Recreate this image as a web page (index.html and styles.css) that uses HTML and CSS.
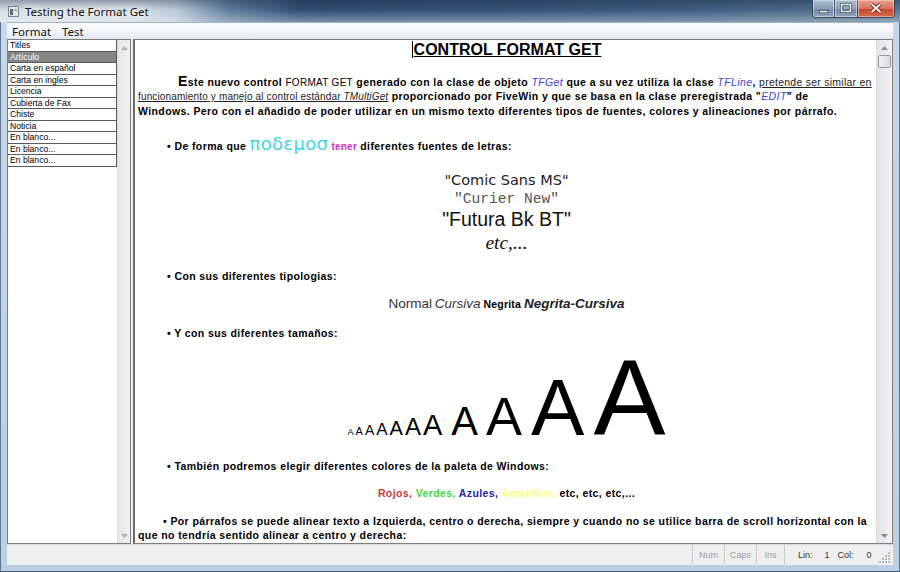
FILE: index.html
```html
<!DOCTYPE html>
<html lang="es">
<head>
<meta charset="utf-8">
<title>Testing the Format Get</title>
<link rel="stylesheet" href="styles.css">
</head>
<body>
<div class="window">
  <div class="titlebar">
    <svg class="appicon" width="11" height="11" viewBox="0 0 11 11"><rect x="0.5" y="0.5" width="10" height="10" fill="#e4e6e8" stroke="#7d8690"/><rect x="2" y="3" width="3" height="6" fill="#5f6670"/><rect x="6" y="3" width="3" height="2" fill="#a9b0b8"/></svg>
    <span class="title">Testing the Format Get</span>
    <div class="caption">
      <div class="cbtn cmin"><svg width="22" height="17" viewBox="0 0 22 17"><rect x="6.5" y="10.5" width="9" height="2.5" fill="#fff" stroke="#33475c" stroke-width="0.8"/></svg></div>
      <div class="cbtn cmax"><svg width="22" height="17" viewBox="0 0 22 17"><rect x="6.5" y="4.5" width="9" height="7" fill="none" stroke="#33475c" stroke-width="2.6"/><rect x="6.5" y="4.5" width="9" height="7" fill="none" stroke="#fff" stroke-width="1.3"/></svg></div>
      <div class="cbtn cclose"><svg width="37" height="17" viewBox="0 0 37 17"><path d="M14 4 L23 12 M23 4 L14 12" stroke="#6b1d12" stroke-width="3.6"/><path d="M14 4 L23 12 M23 4 L14 12" stroke="#fff" stroke-width="2"/></svg></div>
    </div>
  </div>
  <div class="menubar"><span class="mi">Format</span><span class="mi">Test</span></div>
  <div class="client">
    <div class="listbox">
      <div class="items">
        <div class="item">Titles</div>
        <div class="item sel">Artículo</div>
        <div class="item">Carta en español</div>
        <div class="item">Carta en ingles</div>
        <div class="item">Licencia</div>
        <div class="item">Cubierta de Fax</div>
        <div class="item">Chiste</div>
        <div class="item">Noticia</div>
        <div class="item">En blanco...</div>
        <div class="item">En blanco...</div>
        <div class="item">En blanco...</div>
      </div>
      <div class="vscroll lscroll">
        <div class="arr"><svg width="7" height="4" viewBox="0 0 7 4"><path d="M0 4 L3.5 0 L7 4 Z" fill="#b0b0b0"/></svg></div>
        <div class="arr"><svg width="7" height="4" viewBox="0 0 7 4"><path d="M0 0 L3.5 4 L7 0 Z" fill="#b0b0b0"/></svg></div>
      </div>
    </div>
    <div class="editor">
      <div class="doc">
        <div class="h"><span class="caret"></span>CONTROL FORMAT GET</div>
        <div class="p1"><span class="big">E</span>ste nuevo control <span class="n">FORMAT GET</span> generado con la clase de objeto <i class="cls">TFGet</i> que a su vez utiliza la clase <i class="cls">TFLine</i>, <span class="u">pretende ser similar en </span><br><span class="u2">funcionamiento y manejo al control estándar <i>TMultiGet</i></span> proporcionado por FiveWin y que se basa en la clase preregistrada "<i class="cls">EDIT</i>" de<br>Windows. Pero con el añadido de poder utilizar en un mismo texto diferentes tipos de fuentes, colores y alineaciones por párrafo.</div>
        <div class="bl b1">• De forma que <span class="greek">ποδεμοσ</span> <span class="tener">tener</span> diferentes fuentes de letras:</div>
        <div class="fonts">
          <div class="f-comic">"Comic Sans MS"</div>
          <div class="f-cour">"Curier New"</div>
          <div class="f-fut">"Futura Bk BT"</div>
          <div class="f-etc">etc,...</div>
        </div>
        <div class="bl b2">• Con sus diferentes tipologias:</div>
        <div class="types"><span class="t-n">Normal</span> <span class="t-i">Cursiva</span> <span class="t-b">Negrita</span> <span class="t-bi">Negrita-Cursiva</span></div>
        <div class="bl b3">• Y con sus diferentes tamaños:</div>
        <div class="sizes"><span class="a s1">A</span><span class="a s2">A</span><span class="a s3">A</span><span class="a s4">A</span><span class="a s5">A</span><span class="a s6">A</span><span class="a s7">A</span><span class="a s8">A</span><span class="a s9">A</span><span class="a s10">A</span><span class="a s11">A</span></div>
        <div class="bl b4">• También podremos elegir diferentes colores de la paleta de Windows:</div>
        <div class="colors"><span class="c-red">Rojos,</span> <span class="c-green">Verdes,</span> <span class="c-blue">Azules,</span> <span class="c-yel">Amarillos,</span> etc, etc, etc,...</div>
        <div class="last">• Por párrafos se puede alinear texto a Izquierda, centro o derecha, siempre y cuando no se utilice barra de scroll horizontal con la<br>que no tendría sentido alinear a centro y derecha:</div>
      </div>
      <div class="vscroll escroll">
        <div class="arr"><svg width="7" height="4" viewBox="0 0 7 4"><path d="M0 4 L3.5 0 L7 4 Z" fill="#8a8a8a"/></svg></div>
        <div class="thumb"></div>
        <div class="track"></div>
        <div class="arr"><svg width="7" height="4" viewBox="0 0 7 4"><path d="M0 0 L3.5 4 L7 0 Z" fill="#8a8a8a"/></svg></div>
      </div>
    </div>
  </div>
  <div class="statusbar">
    <div class="sb-fill"></div>
    <div class="pn pn-num">Num</div>
    <div class="pn pn-caps">Caps</div>
    <div class="pn pn-ins">Ins</div>
    <div class="pn pn-pos"><span>Lin:</span><span class="v1">1</span><span class="lc">Col:</span><span class="v2">0</span></div>
    <div class="grip"><svg width="12" height="12" viewBox="0 0 12 12"><g fill="#b9b9b9"><rect x="9" y="1" width="2" height="2"/><rect x="6" y="4" width="2" height="2"/><rect x="9" y="4" width="2" height="2"/><rect x="3" y="7" width="2" height="2"/><rect x="6" y="7" width="2" height="2"/><rect x="9" y="7" width="2" height="2"/><rect x="0" y="10" width="2" height="2"/><rect x="3" y="10" width="2" height="2"/><rect x="6" y="10" width="2" height="2"/><rect x="9" y="10" width="2" height="2"/></g></svg></div>
  </div>
</div>
</body>
</html>
```
FILE: styles.css
```css
* { box-sizing: border-box; }
html, body { margin: 0; padding: 0; }
body {
  width: 900px;
  height: 572px;
  overflow: hidden;
  background: #c3d4e6;
  font-family: "Liberation Sans", Arial, sans-serif;
}
.window {
  width: 900px;
  height: 572px;
  display: flex;
  flex-direction: column;
  padding: 0 6px 6px;
  border-left: 1px solid #5b7490;
  border-right: 1px solid #5b7490;
  border-bottom: 1px solid #3f5671;
  background: linear-gradient(180deg, #c8d8e9 0%, #bccfe3 100%);
}

/* title bar */
.titlebar {
  height: 22px;
  margin: 0 -7px;
  padding-left: 8px;
  display: flex;
  align-items: center;
  background:
    linear-gradient(180deg, rgba(20,35,55,0.35) 0%, rgba(255,255,255,0) 45%, rgba(255,255,255,0.35) 100%),
    linear-gradient(90deg, #d5dee7 0px, #cfd9e3 130px, #b9c9d9 175px, #5d7c9c 230px, #2f4e72 300px, #34547a 520px, #3e5e80 700px, #587590 900px);
}
.appicon { flex: none; }
.title {
  margin-left: 6px;
  font-family: "Noto Sans", "Open Sans", sans-serif;
  font-size: 11.5px;
  color: #111;
  text-shadow: 0 0 6px #fff, 0 0 10px #fff, 0 0 14px rgba(255,255,255,0.9);
}
.caption {
  margin-left: auto;
  margin-right: 5px;
  align-self: flex-start;
  display: flex;
  height: 18px;
  border: 1px solid rgba(40,55,75,0.8);
  border-top: none;
  border-radius: 0 0 4px 4px;
  overflow: hidden;
}
.cbtn { height: 17px; display: flex; }
.cmin, .cmax {
  width: 22px;
  background: linear-gradient(180deg, #a9bacb 0%, #8aa0b6 50%, #6f869e 51%, #8ea5bb 100%);
  box-shadow: inset 0 0 0 1px rgba(255,255,255,0.45);
}
.cmin { border-right: 1px solid rgba(40,55,75,0.7); }
.cclose {
  width: 37px;
  border-left: 1px solid rgba(40,55,75,0.7);
  background: linear-gradient(180deg, #e8a395 0%, #d7715d 50%, #c2462d 51%, #d56b4f 100%);
  box-shadow: inset 0 0 0 1px rgba(255,220,210,0.5);
}

/* menu */
.menubar {
  height: 17px;
  display: flex;
  align-items: center;
  gap: 11px;
  padding-left: 5px;
  background: linear-gradient(180deg, #fbfcfe 0%, #f1f4f9 60%, #e4eaf2 100%);
  border-top: 1px solid #9fb1c4;
}
.mi {
  font-family: "Noto Sans", "Open Sans", sans-serif;
  font-size: 11.5px;
  color: #111;
}

/* client */
.client {
  flex: 1;
  display: flex;
  background: #f0f0f0;
  min-height: 0;
}
.listbox {
  width: 124px;
  display: flex;
  border: 1px solid #7e7e7e;
  background: #fff;
}
.items { width: 109px; }
.item {
  height: 11.55px;
  padding-left: 2px;
  border-bottom: 1px solid #5a5a5a;
  border-right: 1px solid #5a5a5a;
  font-size: 8.6px;
  line-height: 10.5px;
  color: #000;
  white-space: nowrap;
}
.item.sel { background: #858585; color: #fff; }
.vscroll {
  display: flex;
  flex-direction: column;
  justify-content: space-between;
}
.lscroll {
  width: 13px;
  background: linear-gradient(90deg, #e6e6e6, #f2f2f2);
  border-left: 1px solid #dcdcdc;
}
.arr {
  height: 15px;
  display: flex;
  align-items: center;
  justify-content: center;
}

.editor {
  flex: 1;
  margin-left: 2px;
  display: flex;
  border: 1px solid #7e7e7e;
  border-left: 2px solid #6a6a6a;
  background: #fff;
}
.escroll {
  width: 16px;
  background: linear-gradient(90deg, #e4e4e4, #f3f3f3);
  border-left: 1px solid #e0e0e0;
  justify-content: flex-start;
}
.escroll .thumb {
  height: 13px;
  margin: 0 1px;
  border: 1px solid #989898;
  border-radius: 2px;
  background: linear-gradient(90deg, #f4f4f4, #dadada);
}
.escroll .track { flex: 1; }

/* document */
.doc {
  flex: 1;
  padding: 0 1px 0 3px;
  overflow: hidden;
  color: #000;
  font-size: 10.5px;
  font-weight: bold;
  letter-spacing: 0.4px;
  white-space: nowrap;
}
.h {
  text-align: center;
  font-size: 16px;
  line-height: 20px;
  letter-spacing: 0;
  text-decoration: underline;
}
.caret {
  display: inline-block;
  width: 1px;
  height: 17px;
  background: #000;
  vertical-align: -3px;
  margin-right: 1px;
}
.p1 {
  margin-top: 14.75px;
  line-height: 14.5px;
  text-indent: 40px;
}
.big { font-size: 14px; line-height: 0; }
.n { font-weight: normal; font-size: 10px; letter-spacing: 0.3px; line-height: 0; }
.cls { font-weight: normal; color: #4242c6; }
.u { font-weight: normal; text-decoration: underline; color: #222; letter-spacing: 0.25px; }
.u2 { font-weight: normal; text-decoration: underline; color: #222; font-size: 10px; letter-spacing: 0.15px; line-height: 0; }
.u2 i { font-weight: normal; }

.bl { padding-left: 29px; line-height: 16px; }
.b1 { margin-top: 17.75px; line-height: 20px; }
.greek {
  font-family: "DejaVu Sans", sans-serif;
  font-weight: normal;
  font-size: 18px;
  letter-spacing: 0.3px;
  color: #3fd6e2;
  line-height: 0;
}
.tener { color: #d532c2; font-size: 10px; letter-spacing: 0.2px; line-height: 0; }

.fonts { margin-top: 14px; text-align: center; font-weight: normal; letter-spacing: 0; }
.f-comic { font-family: "DejaVu Sans", sans-serif; font-size: 14.5px; line-height: 20px; color: #1d1d1d; }
.f-cour { font-family: "Liberation Mono", monospace; font-size: 14.6px; line-height: 18px; color: #555; }
.f-fut { font-family: "Liberation Sans", sans-serif; font-size: 19.5px; line-height: 22px; color: #111; }
.f-etc { font-family: "Liberation Serif", serif; font-style: italic; font-size: 19.5px; line-height: 26px; color: #111; }

.b2 { margin-top: 12px; }
.types { margin-top: 11px; line-height: 18px; text-align: center; letter-spacing: 0; }
.t-n, .t-i { font-weight: normal; font-size: 13.5px; color: #333; }
.t-i { font-style: italic; }
.t-b { font-size: 10.5px; letter-spacing: 0.2px; }
.t-bi { font-style: italic; font-size: 13.5px; color: #222; }

.b3 { margin-top: 12px; }
.sizes {
  margin-top: 2.8px;
  display: flex;
  justify-content: center;
  align-items: baseline;
  font-weight: normal;
  letter-spacing: 0;
}
.a { line-height: 1; color: #000; margin-right: 2px; }
.s1 { font-size: 9px; }
.s2 { font-size: 11px; }
.s3 { font-size: 14px; }
.s4 { font-size: 17px; }
.s5 { font-size: 20px; }
.s6 { font-size: 24px; }
.s7 { font-size: 29px; margin-right: 9px; }
.s8 { font-size: 40px; margin-right: 8px; }
.s9 { font-size: 54px; margin-right: 9px; }
.s10 { font-size: 80px; margin-right: 9px; }
.s11 { font-size: 108px; margin-right: 0; }

.b4 { margin-top: 6.2px; }
.colors { margin-top: 11px; line-height: 16px; text-align: center; }
.c-red { color: #c93737; }
.c-green { color: #3fd63f; }
.c-blue { color: #2424a6; }
.c-yel { color: #ffff7a; }
.last { margin-top: 13px; line-height: 14px; text-indent: 25px; }

/* status bar */
.statusbar {
  height: 21px;
  display: flex;
  background: #efefef;
  border-top: 1px solid #dadada;
  font-size: 9px;
  color: #9e9e9e;
}
.sb-fill { flex: 1; }
.pn {
  display: flex;
  align-items: center;
  justify-content: center;
  border-left: 1px solid #cbcbcb;
}
.pn-num { width: 32px; }
.pn-caps { width: 32px; }
.pn-ins { width: 28px; }
.pn-pos { width: 94px; justify-content: flex-start; padding-left: 13px; color: #333; }
.pn-pos .v1 { margin-left: 12px; }
.pn-pos .lc { margin-left: 8px; }
.pn-pos .v2 { margin-left: 13px; }
.grip {
  width: 15px;
  display: flex;
  align-items: flex-end;
  justify-content: flex-end;
  padding: 0 2px 2px 0;
}
```
